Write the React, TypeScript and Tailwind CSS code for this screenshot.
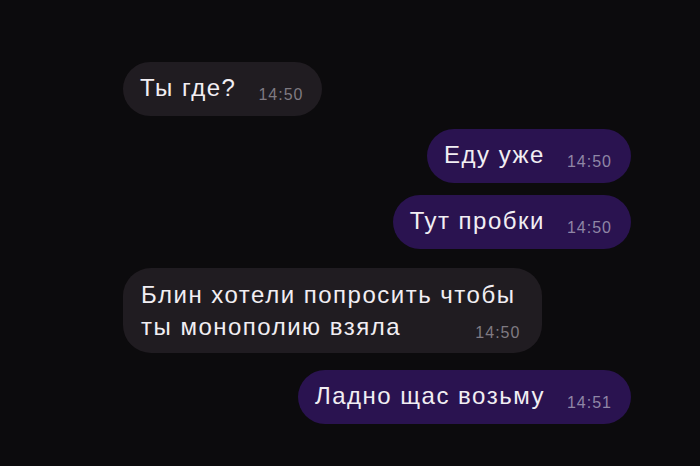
import React from 'react';

interface Msg {
    text: string;
    time: string;
    out: boolean;
}

const font = { fontFamily: '"Liberation Sans", Arial, sans-serif' };

const Time: React.FC<{ time: string; out: boolean }> = ({ time, out }) => (
    <span
        className={`text-[16px] leading-none tracking-[1px] translate-y-[6px] ${out ? 'text-[#8f86a6]' : 'text-[#7f7a82]'}`}
    >
        {time}
    </span>
);

const Bubble: React.FC<Msg> = ({ text, time, out }) => (
    <div
        className={`flex items-center h-[54px] rounded-full pl-[17px] pr-[19px] gap-[22px] ${
            out ? 'self-end bg-[#2a1350]' : 'self-start bg-[#201c21]'
        }`}
    >
        <span className="text-[24px] tracking-[1.5px] text-[#f1eef3] leading-none -translate-y-[1px]">{text}</span>
        <Time time={time} out={out} />
    </div>
);

export default function App() {
    return (
        <div className="w-[700px] h-[466px] bg-[#0c0b0d] overflow-hidden" style={font}>
            <div className="flex flex-col pt-[62px] pl-[123px] pr-[69px]">
                <Bubble text="Ты где?" time="14:50" out={false} />
                <div className="mt-[13px] flex flex-col gap-[12px]">
                    <Bubble text="Еду уже" time="14:50" out />
                    <Bubble text="Тут пробки" time="14:50" out />
                </div>
                <div className="mt-[19px] self-start bg-[#201c21] rounded-[28px] pl-[18px] pr-[22px] pt-[11px] pb-[10px] text-[24px] tracking-[1.5px] text-[#f1eef3]">
                    <div className="leading-[32px] pr-[5px]">Блин хотели попросить чтобы</div>
                    <div className="flex items-center justify-between leading-[32px]">
                        <span>ты монополию взяла</span>
                        <Time time="14:50" out={false} />
                    </div>
                </div>
                <div className="mt-[17px] self-end">
                    <Bubble text="Ладно щас возьму" time="14:51" out />
                </div>
            </div>
        </div>
    );
}
